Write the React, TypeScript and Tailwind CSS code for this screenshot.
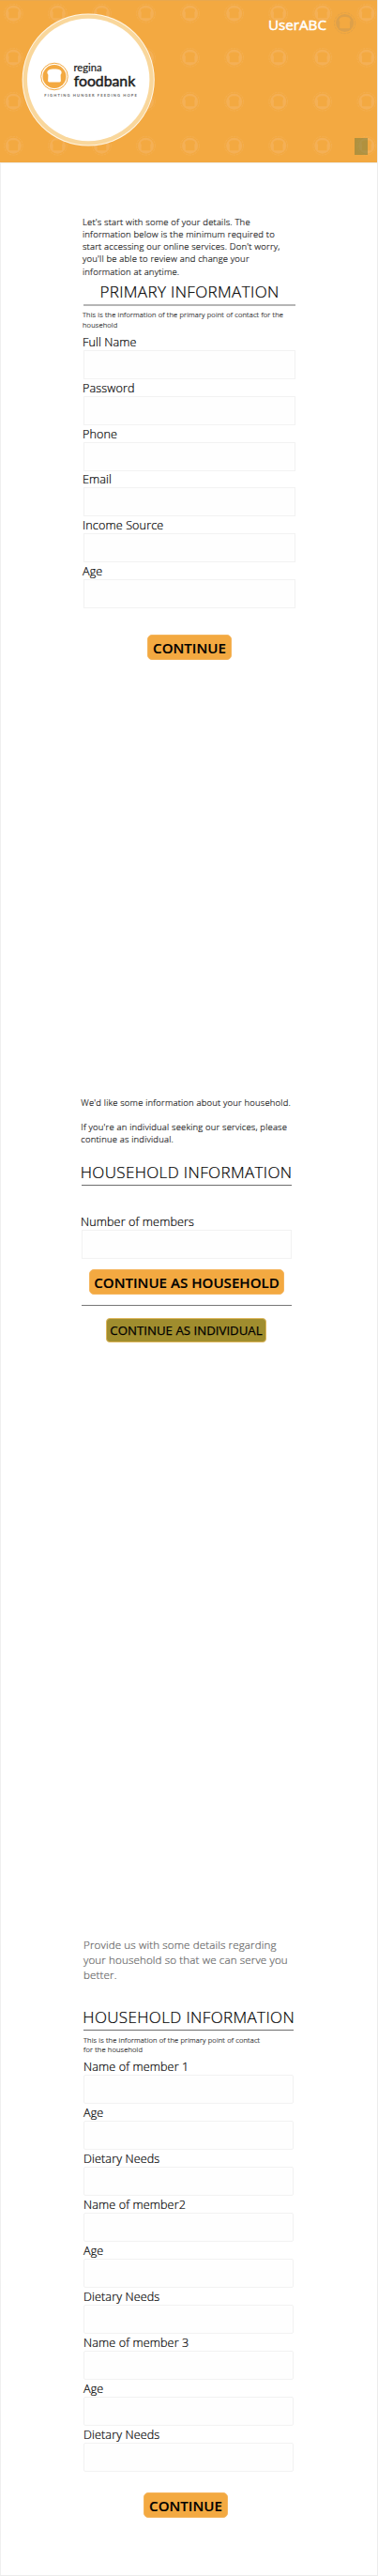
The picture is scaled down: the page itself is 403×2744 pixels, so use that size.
import type { ReactNode } from "react";

const BREAD =
  "M-4.6 -5.6 C-3 -6.9 3 -6.9 4.6 -5.6 C6.4 -4.6 6.4 -2.4 5.2 -1.2 L5.4 4.6 Q5.4 5.6 4.4 5.6 L-4.4 5.6 Q-5.4 5.6 -5.4 4.6 L-5.2 -1.2 C-6.4 -2.4 -6.4 -4.6 -4.6 -5.6Z";

function BreadBadge({ color, hole, scale = 1 }: { color: string; hole: string; scale?: number }) {
  return (
    <g transform={`scale(${scale})`}>
      <circle r="9.9" fill="none" stroke={color} strokeWidth="0.7" strokeDasharray="2.6 0.9" />
      <circle r="8.5" fill={color} />
      <path d={BREAD} fill={hole} transform="scale(0.9)" />
    </g>
  );
}

function Logo() {
  return (
    <svg width="142" height="142" viewBox="23 13.5 142 142" className="block">
      <circle cx="94.2" cy="84.5" r="70.6" fill="#fff6e6" />
      <circle cx="94.2" cy="84.5" r="69.6" fill="#f9d79c" />
      <circle cx="94.2" cy="84.5" r="65.2" fill="#ffffff" />
      <g transform="translate(58 81)">
        <circle r="14.3" fill="none" stroke="#f3a941" strokeWidth="1" />
        <circle r="12.5" fill="#f3a941" />
        <path d={BREAD} fill="#ffffff" transform="translate(0 -0.5) scale(1.27 1.14)" />
      </g>
      <text x="78.5" y="75.8" fontFamily="Lato, sans-serif" fontSize="10.5" fill="#222" stroke="#222" strokeWidth="0.2" textLength="30" lengthAdjust="spacingAndGlyphs">
        regina
      </text>
      <text x="78.7" y="91.8" fontFamily="Lato, sans-serif" fontSize="16" fill="#1c1c1c" stroke="#1c1c1c" strokeWidth="0.5" textLength="65.5" lengthAdjust="spacingAndGlyphs">
        foodbank
      </text>
      <text x="47.3" y="102.8" fontFamily="Lato, sans-serif" fontSize="4" fill="#666" fontWeight="700" textLength="98.5" lengthAdjust="spacing">
        FIGHTING HUNGER FEEDING HOPE
      </text>
    </svg>
  );
}

function Header() {
  return (
    <header className="relative h-[173px] w-[402px] overflow-hidden border-t border-[#e8a84f] bg-[#f3a941]">
      <svg width="402" height="173" className="absolute -top-px left-0">
        {[14.3, 61.3, 108.2, 155.2].map((y) =>
          Array.from({ length: 9 }, (_, i) => (
            <g key={`${i}-${y}`} transform={`translate(${14.3 + i * 47.07} ${y})`}>
              <BreadBadge color="#f4b056" hole="#f3a941" />
            </g>
          )),
        )}
        <g transform="translate(367.6 24.6)">
          <BreadBadge color="#dda04a" hole="#f3a941" scale={1.12} />
        </g>
      </svg>
      <div className="absolute left-[378px] top-[146px] h-[18px] w-[14px] bg-[#6d7a3c]/50" />
      <div className="relative flex items-start justify-between pl-[23px] pr-[54px]">
        <div className="pt-[12.5px]">
          <Logo />
        </div>
        <div className="pt-[12px] text-[15.2px] leading-[27px] text-white [-webkit-text-stroke:0.5px_white]">UserABC</div>
      </div>
    </header>
  );
}

function Lines({ lines, className }: { lines: string[]; className: string }) {
  return (
    <div className={`whitespace-nowrap ${className}`}>
      {lines.map((line, i) => (
        <p key={i}>{line || "\u00a0"}</p>
      ))}
    </div>
  );
}

function Heading({ children, className = "" }: { children: ReactNode; className?: string }) {
  return (
    <h2
      className={`whitespace-nowrap text-[17px] font-light leading-[30px] tracking-[0.37px] text-black [-webkit-text-stroke:0.2px_black] ${className}`}
    >
      {children}
    </h2>
  );
}

function Field({ label, rounded = false }: { label: string; rounded?: boolean }) {
  return (
    <label className="block h-[48.92px]">
      <span
        className={`block h-[18px] whitespace-nowrap text-[12.6px] font-light leading-[20px] tracking-[0.12px] text-black [-webkit-text-stroke:0.2px_black] ${rounded ? "" : "-ml-px"}`}
      >
        {label}
      </span>
      <input
        className={`block h-[31px] w-full border border-[#f2f2f2] bg-[#fefefe] outline-none ${rounded ? "rounded-[2px]" : ""}`}
      />
    </label>
  );
}

function PrimaryButton({ children, className }: { children: ReactNode; className: string }) {
  return (
    <button
      className={`block h-[27px] whitespace-nowrap rounded-[5px] border border-[#f5b55c] bg-[#f3a941] text-center text-[15.1px] font-semibold leading-[26.4px] text-black [-webkit-text-stroke:0.15px_black] ${className}`}
    >
      {children}
    </button>
  );
}

const PRIMARY_FIELDS = ["Full Name", "Password", "Phone", "Email", "Income Source", "Age"];
const MEMBER_FIELDS = [
  "Name of member 1",
  "Age",
  "Dietary Needs",
  "Name of member2",
  "Age",
  "Dietary Needs",
  "Name of member 3",
  "Age",
  "Dietary Needs",
];

export default function App() {
  return (
    <div className="h-[2744px] w-[403px] overflow-hidden border-b border-r border-[#ececec] bg-white font-['Open_Sans',sans-serif]">
      <Header />
      <main className="h-[2570px] border-l border-t border-[#efefef]">
        <section className="ml-[88px] h-[926px] w-[226px] pt-[55.7px]">
          <Lines
            className="-ml-px text-[9.5px] font-light leading-[13.25px] tracking-[0.18px] text-[#222] [-webkit-text-stroke:0.2px_#222]"
            lines={[
              "Let's start with some of your details. The",
              "information below is the minimum required to",
              "start accessing our online services. Don't worry,",
              "you'll be able to review and change your",
              "information at anytime.",
            ]}
          />
          <Heading className="h-[28px] text-center">PRIMARY INFORMATION</Heading>
          <div className="h-[2px] bg-[#b5b5b5]" />
          <Lines
            className="-ml-px pt-[4.3px] text-[7.5px] font-light leading-[10.4px] tracking-[0.16px] text-[#222] [-webkit-text-stroke:0.15px_#222]"
            lines={["This is the information of the primary point of contact for the", "household"]}
          />
          <div className="pt-[3.7px]">
            {PRIMARY_FIELDS.map((label) => (
              <Field key={label} label={label} />
            ))}
          </div>
          <PrimaryButton className="ml-[68px] mt-[27.5px] w-[90px]">CONTINUE</PrimaryButton>
        </section>

        <section className="ml-[86px] h-[900px] w-[224px] pt-[67.8px]">
          <Lines
            className="-ml-[0.7px] text-[9.45px] font-light leading-[13.1px] tracking-[0.2px] text-[#222] [-webkit-text-stroke:0.2px_#222]"
            lines={[
              "We'd like some information about your household.",
              "",
              "If you're an individual seeking our services, please",
              "continue as individual.",
            ]}
          />
          <Heading className="-ml-[1.3px] mt-[13.6px] h-[28.2px]">HOUSEHOLD INFORMATION</Heading>
          <div className="mb-[29px] h-px bg-[#6e6e6e]" />
          <Field label="Number of members" />
          <PrimaryButton className="ml-[8px] mt-[11.6px] w-[208px]">CONTINUE AS HOUSEHOLD</PrimaryButton>
          <div className="mt-[10.8px] h-px bg-[#777]" />
          <button className="ml-[26px] mt-[12.4px] block h-[26px] w-[171px] whitespace-nowrap rounded-[4px] border border-[#dcb55a] bg-[#a08d2e] text-center text-[13.25px] leading-[25px] text-black [-webkit-text-stroke:0.25px_black]">
            CONTINUE AS INDIVIDUAL
          </button>
        </section>

        <section className="ml-[88px] w-[224px] pt-[64px]">
          <Lines
            className="text-[11.6px] font-light leading-[16px] tracking-[0.12px] text-[#666] [-webkit-text-stroke:0.2px_#666]"
            lines={["Provide us with some details regarding", "your household so that we can serve you", "better."]}
          />
          <Heading className="-ml-[0.7px] mt-[21.8px] h-[28.2px]">HOUSEHOLD INFORMATION</Heading>
          <div className="h-px bg-[#6e6e6e]" />
          <Lines
            className="pt-[5px] text-[7.5px] font-light leading-[10px] tracking-[0.16px] text-[#222] [-webkit-text-stroke:0.15px_#222]"
            lines={["This is the information of the primary point of contact", "for the household"]}
          />
          <div className="pt-[4.3px]">
            {MEMBER_FIELDS.map((label, i) => (
              <Field key={i} label={label} rounded />
            ))}
          </div>
          <PrimaryButton className="ml-[64px] mt-[22.8px] w-[90px]">CONTINUE</PrimaryButton>
        </section>
      </main>
    </div>
  );
}
